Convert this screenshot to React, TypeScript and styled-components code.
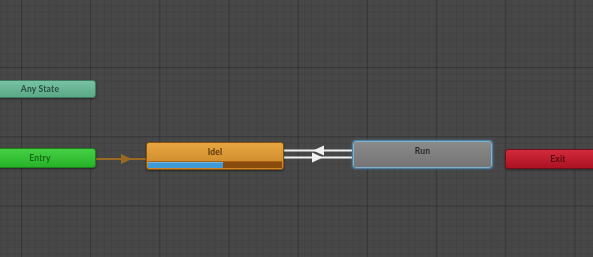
import React from "react";
import styled, { createGlobalStyle, css } from "styled-components";

const Global = createGlobalStyle`
  html, body { margin: 0; padding: 0; background: #464646; }
  body { font-family: "Lato", "Liberation Sans", sans-serif; overflow: hidden; }
`;

const Canvas = styled.div`
  position: relative;
  width: 593px;
  height: 257px;
  overflow: hidden;
  background-color: #474747;
  background-image:
    linear-gradient(to right, rgba(0,0,0,0.2) 1px, transparent 1px),
    linear-gradient(to bottom, rgba(0,0,0,0.2) 1px, transparent 1px),
    linear-gradient(to right, rgba(0,0,0,0.06) 1px, transparent 1px),
    linear-gradient(to bottom, rgba(0,0,0,0.06) 1px, transparent 1px);
  background-size: 69.2px 69.2px, 69.2px 69.2px, 6.92px 6.92px, 6.92px 6.92px;
  background-position: 21px -2px, 21px -2px, 21px -2px, 21px -2px;
`;

type Kind = "any" | "entry" | "idle" | "run" | "exit";

const palette: Record<Kind, { top: string; bottom: string; text: string; border: string }> = {
  any: { top: "#76c2a2", bottom: "#5ba887", text: "#2a4c3f", border: "#3f7a62" },
  entry: { top: "#45cf45", bottom: "#27b327", text: "#156c15", border: "#1c821c" },
  idle: { top: "#e8a640", bottom: "#c98528", text: "#55320a", border: "#8a5210" },
  run: { top: "#8a8a8a", bottom: "#757575", text: "#2a2a2a", border: "#5a5a5a" },
  exit: { top: "#d22a3c", bottom: "#ab1222", text: "#560810", border: "#70101a" },
};

const Node = styled.div<{ $x: number; $y: number; $w: number; $h: number; $kind: Kind; $selected?: boolean }>`
  position: absolute;
  left: ${(p) => p.$x}px;
  top: ${(p) => p.$y}px;
  width: ${(p) => p.$w}px;
  height: ${(p) => p.$h}px;
  box-sizing: border-box;
  border-radius: 3px;
  background: linear-gradient(to bottom, ${(p) => palette[p.$kind].top}, ${(p) => palette[p.$kind].bottom});
  border: 1px solid ${(p) => palette[p.$kind].border};
  box-shadow: 0 1px 2px rgba(0, 0, 0, 0.45);
  display: flex;
  flex-direction: column;
  overflow: hidden;
  ${(p) =>
    p.$selected &&
    css`
      border: 1px solid #7fb0cc;
      box-shadow: 0 0 0 1px #4a7f9e, 0 0 3px 1px rgba(90, 150, 190, 0.45);
    `}
`;

const Label = styled.div<{ $kind: Kind; $h?: number }>`
  flex: ${(p) => (p.$h ? "0 0 auto" : "1 1 auto")};
  height: ${(p) => (p.$h ? `${p.$h}px` : "auto")};
  display: flex;
  align-items: center;
  justify-content: center;
  font-size: 8.5px;
  font-weight: 700;
  letter-spacing: 0.2px;
  color: ${(p) => palette[p.$kind].text};
  filter: blur(0.3px);
`;

const Progress = styled.div`
  margin: auto 1px 1px 1px;
  height: 6px;
  background: #8a4c0c;
  border-top: 1px solid #a86514;
  display: flex;
`;

const ProgressFill = styled.div`
  height: 100%;
  background: #3f9ad6;
  border-top: 1px solid #6bb7e8;
  box-sizing: border-box;
`;

const Links = styled.svg`
  position: absolute;
  left: 0;
  top: 0;
  width: 593px;
  height: 257px;
  pointer-events: none;
`;

export default function App() {
  return (
    <>
      <Global />
      <Canvas>
        <Links viewBox="0 0 593 257">
          <line x1="95" y1="159" x2="147" y2="159" stroke="#9a6a22" strokeWidth="2" />
          <polygon points="121,154 132,159 121,164" fill="#9a6a22" />
          <line x1="283" y1="150.5" x2="354" y2="150.5" stroke="#f0f0f0" strokeWidth="2" />
          <polygon points="324,145.5 313,150.5 324,155.5" fill="#f0f0f0" />
          <line x1="283" y1="157.5" x2="354" y2="157.5" stroke="#f0f0f0" strokeWidth="2" />
          <polygon points="312,152.5 323,157.5 312,162.5" fill="#f0f0f0" />
        </Links>

        <Node $kind="any" $x={-16} $y={80} $w={112} $h={18}>
          <Label $kind="any">Any State</Label>
        </Node>

        <Node $kind="entry" $x={-16} $y={148} $w={112} $h={20}>
          <Label $kind="entry">Entry</Label>
        </Node>

        <Node $kind="idle" $x={146} $y={142} $w={138} $h={28}>
          <Label $kind="idle" $h={18}>Idel</Label>
          <Progress>
            <ProgressFill style={{ width: "56%" }} />
          </Progress>
        </Node>

        <Node $kind="run" $x={353} $y={141} $w={139} $h={27} $selected>
          <Label $kind="run" $h={18}>Run</Label>
        </Node>

        <Node $kind="exit" $x={505} $y={149} $w={106} $h={20}>
          <Label $kind="exit">Exit</Label>
        </Node>
      </Canvas>
    </>
  );
}
